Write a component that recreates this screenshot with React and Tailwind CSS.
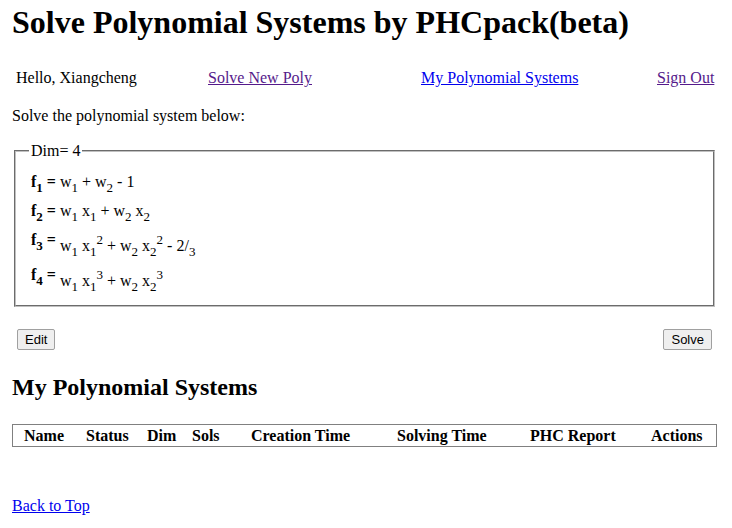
const serif = { fontFamily: '"Liberation Serif", "Times New Roman", serif' };

function Sub({ children }) {
  return <span className="text-[13px] relative top-[5px] leading-none">{children}</span>;
}

function Sup({ children }) {
  return <span className="text-[13px] relative -top-[7px] leading-none">{children}</span>;
}

function Formula({ n, children, tall }) {
  return (
    <div className="flex items-start">
      <span className="font-bold whitespace-pre">
        f<Sub>{n}</Sub> ={" "}
      </span>
      <span className={`whitespace-pre ${tall ? "pt-[6px]" : ""}`}>{children}</span>
    </div>
  );
}

export default function App() {
  return (
    <div className="w-[717px] pl-[12px] text-[16px] text-black bg-white min-h-[528px]" style={serif}>
      <h1 className="text-[32px] font-bold leading-[37px] pt-[4px]">Solve Polynomial Systems by PHCpack(beta)</h1>

      {/* nav */}
      <div className="flex mt-[28px] pl-[4px] leading-[18px]">
        <span className="w-[192px]">Hello, Xiangcheng</span>
        <a href="#" className="w-[213px] underline text-[#551a8b]">Solve New Poly</a>
        <a href="#" className="w-[236px] underline text-[#0000ee]">My Polynomial Systems</a>
        <a href="#" className="underline text-[#551a8b]">Sign Out</a>
      </div>

      <p className="mt-[20px] leading-[18px]">Solve the polynomial system below:</p>

      <fieldset className="mx-[2px] mt-[17px] h-[165px] border-2 [border-style:groove] border-[#c0c0c0] px-[15px] pt-[6px]">
        <legend className="px-[2px] ml-[-2px] leading-[18px]">Dim= 4</legend>
        <div className="flex flex-col gap-[11px] leading-[18px] mt-[7px]">
          <Formula n="1">w<Sub>1</Sub> + w<Sub>2</Sub> - 1</Formula>
          <Formula n="2">w<Sub>1</Sub> x<Sub>1</Sub> + w<Sub>2</Sub> x<Sub>2</Sub></Formula>
          <Formula n="3" tall>w<Sub>1</Sub> x<Sub>1</Sub><Sup>2</Sup> + w<Sub>2</Sub> x<Sub>2</Sub><Sup>2</Sup> - 2/<Sub>3</Sub></Formula>
          <Formula n="4" tall>w<Sub>1</Sub> x<Sub>1</Sub><Sup>3</Sup> + w<Sub>2</Sub> x<Sub>2</Sub><Sup>3</Sup></Formula>
        </div>
      </fieldset>

      <div className="flex justify-between mt-[22px] pl-[5px] pr-[5px]" style={{ fontFamily: '"Liberation Sans", Arial, sans-serif' }}>
        <button className="h-[21px] px-[7px] text-[13px] leading-none bg-[#efefef] border border-[#a0a0a0] rounded-[2px]">Edit</button>
        <button className="h-[21px] px-[7px] text-[13px] leading-none bg-[#efefef] border border-[#a0a0a0] rounded-[2px]">Solve</button>
      </div>

      <h2 className="text-[24px] font-bold leading-[28px] mt-[23px]">My Polynomial Systems</h2>

      <div className="mt-[23px] w-[705px] h-[23px] border border-[#808080] flex items-center font-bold leading-[18px]">
        <span className="w-[73px] pl-[11px]">Name</span>
        <span className="w-[61px]">Status</span>
        <span className="w-[45px]">Dim</span>
        <span className="w-[59px]">Sols</span>
        <span className="w-[146px]">Creation Time</span>
        <span className="w-[133px]">Solving Time</span>
        <span className="w-[121px]">PHC Report</span>
        <span>Actions</span>
      </div>

      <div className="mt-[50px] leading-[18px]">
        <a href="#" className="underline text-[#0000ee]">Back to Top</a>
      </div>
    </div>
  );
}
